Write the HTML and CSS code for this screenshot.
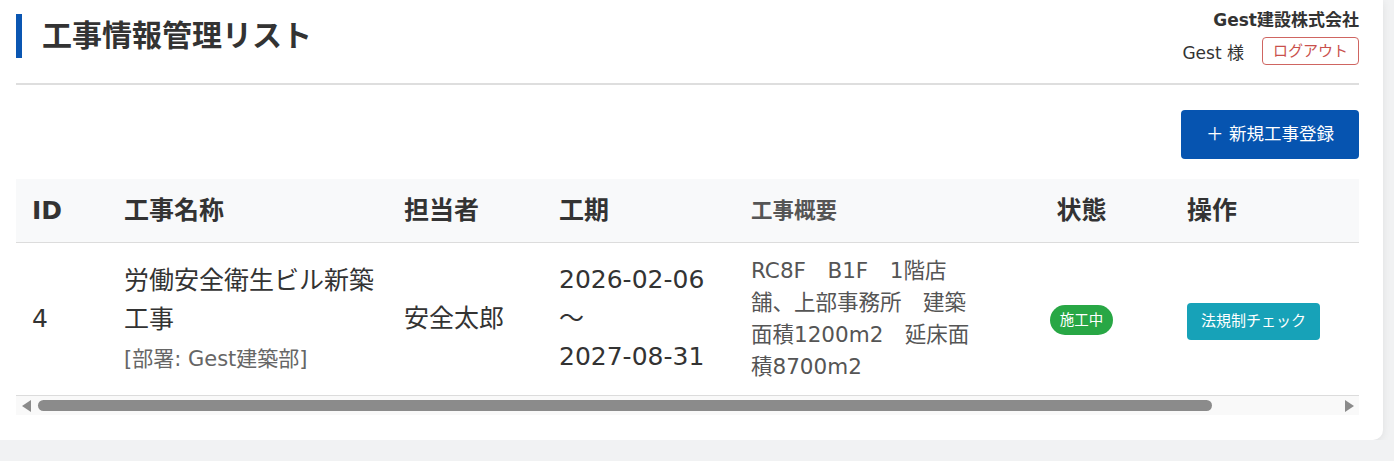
FILE: index.html
```html
<!DOCTYPE html>
<html lang="ja">
<head>
  <meta charset="UTF-8" />
  <meta name="viewport" content="width=device-width, initial-scale=1.0" />
  <title>工事情報管理リスト</title>
  <link rel="stylesheet" href="styles.css">
</head>
<body>
  <div class="card">
    <header class="page-header">
      <h1 class="page-title">工事情報管理リスト</h1>
      <div class="user-box">
        <div class="company">Gest建設株式会社</div>
        <div class="user-row">
          <span class="user-name">Gest 様</span>
          <button class="btn-logout">ログアウト</button>
        </div>
      </div>
    </header>

    <div class="toolbar">
      <button class="btn-new">＋ 新規工事登録</button>
    </div>

    <div class="table-wrap">
      <table class="project-table">
        <colgroup>
          <col class="col-id">
          <col class="col-name">
          <col class="col-person">
          <col class="col-term">
          <col class="col-summary">
          <col class="col-status">
          <col class="col-action">
        </colgroup>
        <thead>
          <tr>
            <th>ID</th>
            <th>工事名称</th>
            <th>担当者</th>
            <th>工期</th>
            <th class="th-muted">工事概要</th>
            <th class="center">状態</th>
            <th>操作</th>
          </tr>
        </thead>
        <tbody>
          <tr>
            <td>4</td>
            <td class="name-cell">
              <div class="project-name">労働安全衛生ビル新築工事</div>
              <div class="dept">[部署: Gest建築部]</div>
            </td>
            <td>安全太郎</td>
            <td class="term">2026-02-06<br>～<br>2027-08-31</td>
            <td class="summary">RC8F　B1F　1階店舗、上部事務所　建築面積1200m2　延床面積8700m2</td>
            <td class="center"><span class="badge">施工中</span></td>
            <td><button class="btn-check">法規制チェック</button></td>
          </tr>
        </tbody>
      </table>
    </div>
    <!-- horizontal scrollbar of the table -->
    <div class="scrollbar" aria-hidden="true">
      <span class="arrow arrow-left"></span>
      <div class="track">
        <div class="thumb" style="width: 1174px"></div>
      </div>
      <span class="arrow arrow-right"></span>
    </div>
  </div>
</body>
</html>
```

FILE: styles.css
```css
body {
  margin: 0;
  background: #f1f2f3;
  font-family: 'DejaVu Sans', 'Noto Sans CJK JP', sans-serif;
  color: #333;
}

.card {
  width: 1343px;
  background: #fff;
  padding: 10px 24px 25px 16px;
  border-radius: 0 0 10px 0;
  box-shadow: 0 2px 8px rgba(0, 0, 0, 0.08);
}

/* header */
.page-header {
  display: flex;
  justify-content: space-between;
  align-items: flex-start;
  padding-bottom: 18px;
  border-bottom: 2px solid #dedede;
}

.page-title {
  margin: 4px 0 0;
  padding-left: 20px;
  border-left: 6px solid #0a56b2;
  font-size: 30px;
  line-height: 44px;
  font-weight: bold;
  color: #333;
}

.user-box {
  text-align: right;
}

.company {
  font-size: 17px;
  font-weight: bold;
  line-height: 20px;
}

.user-row {
  display: flex;
  align-items: center;
  gap: 18px;
  margin-top: 7px;
}

.user-name {
  font-size: 17px;
}

.btn-logout {
  font-family: inherit;
  font-size: 15px;
  line-height: 20px;
  padding: 3px 10px;
  background: #fff;
  color: #c9504c;
  border: 1px solid #cf6561;
  border-radius: 4px;
}

/* toolbar */
.toolbar {
  display: flex;
  justify-content: flex-end;
  margin-top: 25px;
}

.btn-new {
  font-family: inherit;
  font-size: 17.5px;
  line-height: 25px;
  padding: 12px 25px;
  background: #0654b0;
  color: #fff;
  border: none;
  border-radius: 4px;
}

/* table */
.table-wrap {
  margin-top: 20px;
  overflow: hidden;
}

.project-table {
  width: 1500px;
  table-layout: fixed;
  border-collapse: collapse;
}

.col-id { width: 92px; }
.col-name { width: 280px; }
.col-person { width: 155px; }
.col-term { width: 192px; }
.col-summary { width: 257px; }
.col-status { width: 179px; }
.col-action { width: 345px; }

.project-table th {
  background: #f8f9fa;
  text-align: left;
  font-size: 25px;
  line-height: 31px;
  padding: 16px;
  border-bottom: 1px solid #dcdcdc;
  color: #333;
}

.project-table th.th-muted {
  font-size: 21.5px;
  color: #555;
}

.project-table td {
  font-size: 25px;
  line-height: 38.5px;
  padding: 12px 16px;
  vertical-align: middle;
  border-bottom: 1px solid #dcdcdc;
}

.project-table td.name-cell {
  padding-right: 10px;
}

.project-table .center {
  text-align: center;
}

.dept {
  font-size: 21px;
  line-height: 34px;
  margin-top: 3px;
  color: #666;
}

.project-table td.summary {
  font-size: 21.5px;
  line-height: 32px;
  color: #555;
}

.badge {
  display: inline-block;
  padding: 5px 10px;
  font-size: 14.5px;
  line-height: 20px;
  color: #fff;
  background: #28a745;
  border-radius: 15px;
  vertical-align: middle;
}

.btn-check {
  font-family: inherit;
  font-size: 15px;
  line-height: 23px;
  padding: 7px 14px;
  color: #fff;
  background: #17a2b8;
  border: none;
  border-radius: 4px;
}

/* scrollbar */
.scrollbar {
  display: flex;
  align-items: center;
  height: 19px;
  padding: 0 5px 0 6px;
  background: #f9f9f9;
}

.arrow {
  width: 0;
  height: 0;
  border-top: 6px solid transparent;
  border-bottom: 6px solid transparent;
}

.arrow-left {
  border-right: 9px solid #8b8b8b;
}

.arrow-right {
  border-left: 9px solid #8b8b8b;
}

.track {
  flex: 1;
  padding: 0 7px;
}

.thumb {
  height: 11px;
  background: #8b8b8b;
  border-radius: 6px;
}
```
